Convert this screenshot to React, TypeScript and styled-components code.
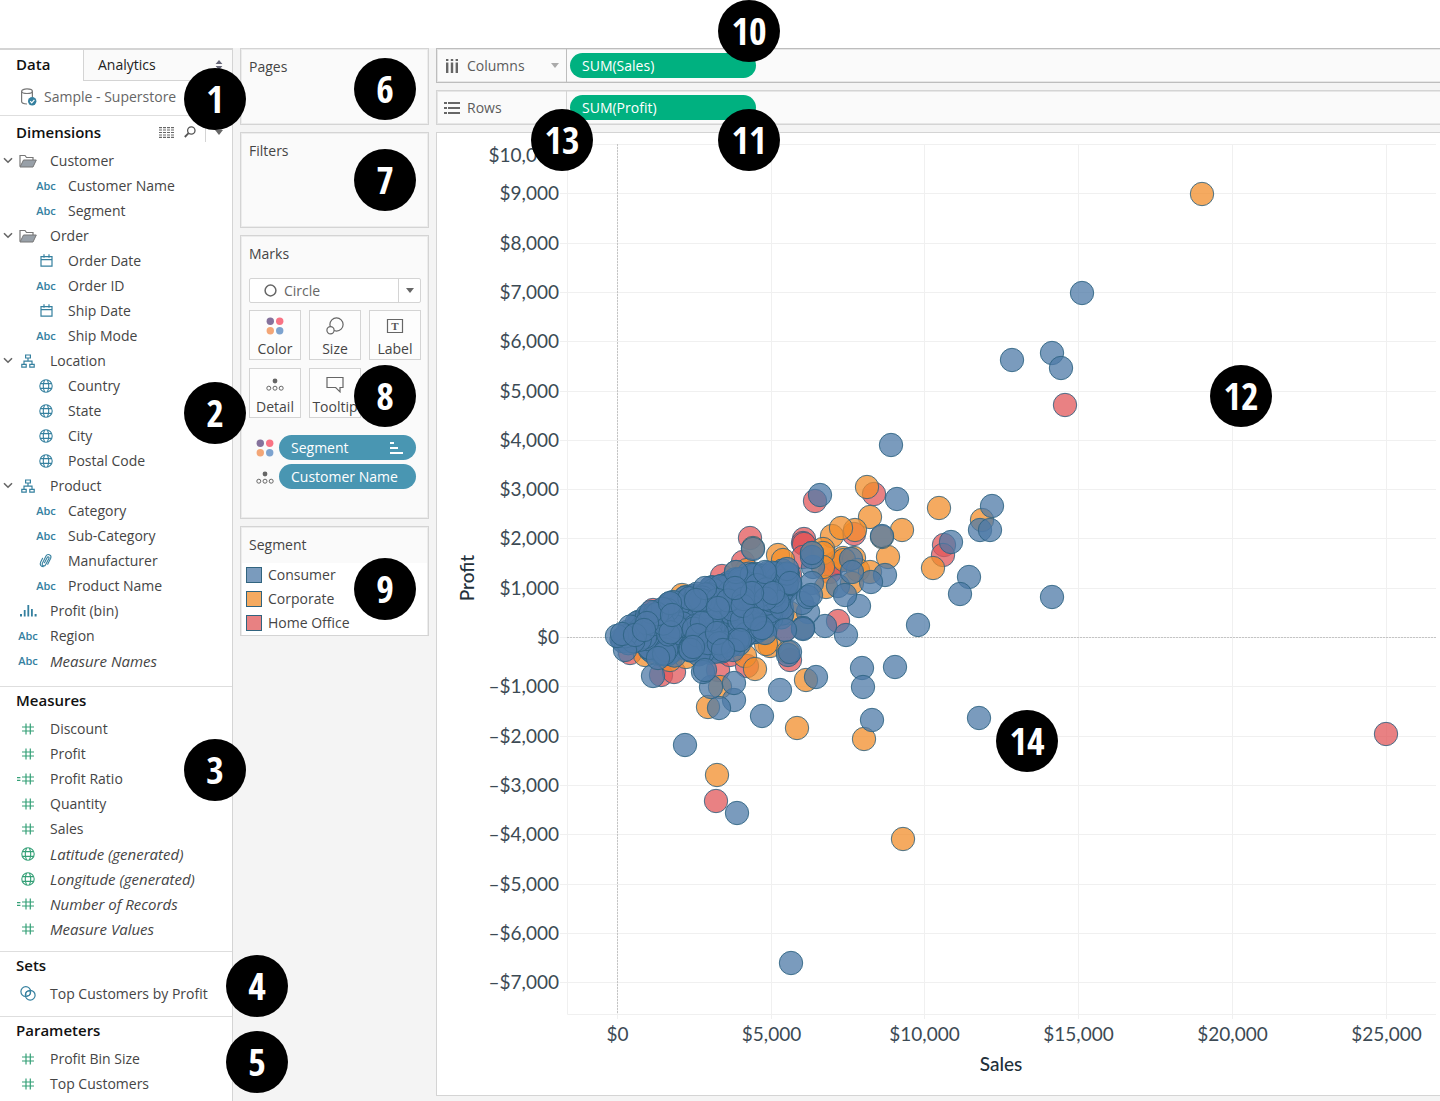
import React from "react";
import styled, { createGlobalStyle, css } from "styled-components";

const colors = {
  canvas: "#f4f4f4",
  card: "#fafafa",
  line: "#d4d4d4",
  lineStrong: "#bdbdbd",
  text: "#454545",
  dim: "#35809f",
  measure: "#35a077",
  pillBlue: "#4996b2",
  pillGreen: "#00b180",
};

const uiFont = `"Open Sans", "Noto Sans", sans-serif`;
const axisFont = `Lato, "Open Sans", sans-serif`;

const GlobalStyle = createGlobalStyle`
  *, *::before, *::after { box-sizing: border-box; }
  body { margin: 0; background: #fff; font-family: ${uiFont}; font-size: 14px; line-height: 20px; color: ${colors.text}; }
  button, select { font: inherit; color: inherit; }
  ul { list-style: none; margin: 0; padding: 0; }
  h2 { margin: 0; }
  svg { display: block; }
`;

/* ---------- layout ---------- */

const Page = styled.div`
  position: relative;
  padding-top: 48px;
`;

const Workspace = styled.main`
  display: flex;
  align-items: stretch;
  background: ${colors.canvas};
  min-height: calc(100vh - 48px);
`;

const DataPane = styled.aside`
  flex: 0 0 233px;
  background: #fff;
  border-top: 2px solid ${colors.line};
  border-right: 1px solid ${colors.line};
`;

const CardColumn = styled.div`
  flex: 0 0 203px;
  display: flex;
  flex-direction: column;
  gap: 7px;
  padding: 0 7px;
`;

const SheetColumn = styled.div`
  flex: 1;
  min-width: 0;
  display: flex;
  flex-direction: column;
  gap: 7px;
  padding-bottom: 4px;
`;

/* ---------- data pane ---------- */

const Tabs = styled.div`
  display: flex;
  height: 31px;
`;

const Tab = styled.button<{ $active?: boolean }>`
  display: flex;
  align-items: center;
  justify-content: space-between;
  border: 0;
  background: #fff;
  color: #222;
  padding: 0 0 4px 16px;
  width: 83px;
  ${(p) =>
    p.$active
      ? css`
          font-weight: 600;
          font-size: 15px;
          color: #111;
        `
      : css`
          flex: 1;
          background: ${colors.card};
          border-left: 1px solid ${colors.line};
          border-bottom: 1px solid ${colors.line};
          padding: 0 9px 0 14px;
        `}
`;

const Source = styled.button`
  display: flex;
  align-items: center;
  gap: 7px;
  width: 100%;
  height: 34px;
  border: 0;
  background: none;
  padding: 0 0 2px 20px;
  color: #666;
`;

const Section = styled.section<{ $pad: number }>`
  border-top: 1px solid #dedede;
  padding-bottom: ${(p) => p.$pad}px;
`;

const SectionHead = styled.div<{ $tall?: boolean }>`
  display: flex;
  align-items: center;
  height: ${(p) => (p.$tall ? 32 : 29)}px;
  padding: 0 0 ${(p) => (p.$tall ? 0 : 3)}px 16px;
`;

const SectionTitle = styled.h2`
  flex: 1;
  font-size: 15px;
  font-weight: 600;
  color: #111;
`;

const Tools = styled.div`
  display: flex;
  align-items: center;
  height: 100%;
`;

const Tool = styled.button<{ $divided?: boolean }>`
  display: flex;
  align-items: center;
  justify-content: center;
  width: ${(p) => (p.$divided ? 27 : 24)}px;
  height: 20px;
  border: 0;
  border-left: ${(p) => (p.$divided ? `1px solid ${colors.line}` : "0")};
  margin-left: ${(p) => (p.$divided ? 3 : 0)}px;
  background: none;
  padding: 0;
`;

const FieldRow = styled.button<{ $child?: boolean; $italic?: boolean }>`
  display: flex;
  align-items: center;
  width: 100%;
  height: 25px;
  border: 0;
  background: none;
  text-align: left;
  white-space: nowrap;
  padding: 0 0 0 ${(p) => (p.$child ? 18 : 0)}px;
  font-style: ${(p) => (p.$italic ? "italic" : "normal")};
  font-size: ${(p) => (p.$italic ? 15 : 14)}px;
`;

const Twisty = styled.span`
  width: 16px;
  padding-left: 3px;
`;

const IconSlot = styled.span`
  display: flex;
  justify-content: center;
  width: 24px;
  margin-right: 10px;
`;

const Abc = styled.span`
  color: ${colors.dim};
  font-size: 11px;
  font-weight: 600;
  font-style: normal;
`;

/* ---------- cards ---------- */

const Card = styled.section<{ $min: number }>`
  min-height: ${(p) => p.$min}px;
  background: ${colors.card};
  border: 1px solid ${colors.line};
  box-shadow: inset 0 0 0 1px #ececec;
  padding: 8px 7px 0 8px;
`;

const LegendCard = styled(Card)`
  padding: 8px 1px 0;
`;

const CardTitle = styled.h2`
  font-size: 14px;
  line-height: 20px;
  font-weight: 400;
`;

const LegendTitle = styled(CardTitle)`
  padding: 0 7px 8px;
`;

const MarkType = styled.label`
  position: relative;
  display: block;
  margin-top: 14px;
  width: 172px;
`;

const MarkSelect = styled.select`
  appearance: none;
  display: block;
  width: 100%;
  height: 25px;
  border: 1px solid ${colors.line};
  border-radius: 2px;
  background: #fff;
  padding: 0 28px 0 34px;
  color: #666;
`;

const MarkShape = styled.span`
  position: absolute;
  left: 15px;
  top: 6px;
  pointer-events: none;
`;

const MarkArrow = styled.span`
  position: absolute;
  right: 0;
  top: 1px;
  bottom: 1px;
  width: 23px;
  display: flex;
  align-items: center;
  justify-content: center;
  border-left: 1px solid ${colors.line};
  pointer-events: none;
`;

const MarkGrid = styled.div`
  display: grid;
  grid-template-columns: repeat(3, 52px);
  gap: 8px;
  margin: 7px 0 17px;
`;

const MarkButton = styled.button`
  display: flex;
  flex-direction: column;
  align-items: center;
  justify-content: space-between;
  height: 50px;
  border: 1px solid ${colors.line};
  background: #fdfdfd;
  padding: 6px 0 0;
`;

const Encodings = styled.ul`
  display: flex;
  flex-direction: column;
  gap: 4px;
`;

const Encoding = styled.li`
  display: grid;
  grid-template-columns: 30px 137px;
  align-items: center;
`;

const EncodingIcon = styled.span`
  display: flex;
  justify-content: center;
  padding-left: 2px;
`;

const Pill = styled.button<{ $green?: boolean }>`
  display: flex;
  align-items: center;
  justify-content: space-between;
  width: ${(p) => (p.$green ? 186 : 137)}px;
  height: 25px;
  border: 0;
  border-radius: 13px;
  background: ${(p) => (p.$green ? colors.pillGreen : colors.pillBlue)};
  color: #fff;
  padding: 0 13px 0 12px;
  white-space: nowrap;
`;

const LegendList = styled.ul`
  background: #fff;
`;

const LegendItem = styled.li`
  display: flex;
  align-items: center;
  gap: 6px;
  height: 24px;
  padding-left: 4px;
`;

const Swatch = styled.span<{ $color: string }>`
  width: 16px;
  height: 16px;
  border: 1px solid #31647f;
  background: ${(p) => p.$color};
`;

/* ---------- shelves ---------- */

const Shelf = styled.div<{ $strong?: boolean }>`
  display: flex;
  height: 35px;
  background: ${colors.card};
  border: 1px solid ${(p) => (p.$strong ? colors.lineStrong : colors.line)};
  border-right: 0;
  box-shadow: inset 1px 1px #e6e6e6, inset 0 -1px #e6e6e6;
`;

const ShelfLabel = styled.div<{ $strong?: boolean }>`
  display: flex;
  align-items: center;
  gap: 7px;
  width: 130px;
  padding: 0 7px;
  border-right: 1px solid ${(p) => (p.$strong ? colors.lineStrong : colors.line)};
`;

const ShelfName = styled.span`
  flex: 1;
  color: #5c5c5c;
`;

const ShelfDrop = styled.div`
  display: flex;
  align-items: center;
  padding-left: 3px;
`;

const ChartPanel = styled.section`
  background: #fff;
  border: 1px solid ${colors.line};
  border-right: 0;
`;

const ChartSvg = styled.svg`
  width: 100%;
  height: auto;
`;

const AxisText = styled.text`
  font-family: ${axisFont};
  font-size: 19px;
  fill: #3c4a54;
`;

const AxisTitle = styled.text`
  font-family: ${axisFont};
  font-size: 19px;
  font-weight: 500;
  fill: #22303a;
`;

/* ---------- numbered callouts ---------- */

const Callout = styled.span<{ $x: number; $y: number }>`
  position: absolute;
  left: ${(p) => p.$x - 31}px;
  top: ${(p) => p.$y - 31}px;
  width: 62px;
  height: 62px;
  border-radius: 50%;
  background: #000;
  color: #fff;
  display: flex;
  align-items: center;
  justify-content: center;
  font-family: "Open Sans Condensed", "Roboto Condensed", Roboto, sans-serif;
  font-size: 38px;
  line-height: 60px;
  padding-bottom: 2px;
  font-weight: 700;
`;

const callouts: [number, number, number][] = [
  [1, 215, 99], [2, 215, 413], [3, 215, 770], [4, 257, 986], [5, 257, 1062],
  [6, 385, 89], [7, 385, 180], [8, 385, 396], [9, 385, 589], [10, 749, 31],
  [11, 749, 140], [12, 1241, 396], [13, 562, 140], [14, 1027, 741],
];

/* ---------- icons ---------- */

const Chevron = () => (
  <svg width="10" height="7" viewBox="0 0 10 7" fill="none" stroke="#666" strokeWidth="1.6">
    <path d="M1 1.2 5 5.2 9 1.2" />
  </svg>
);

const FolderIcon = () => (
  <svg width="18" height="14" viewBox="0 0 18 14">
    <path d="M1 12.5V1.5h5l1.5 2H14V6" fill="#fff" stroke="#777" strokeWidth="1.2" />
    <path d="M1 13 4.5 6H17.3L14 13Z" fill="#98a0a8" stroke="#777" />
  </svg>
);

const HierarchyIcon = () => (
  <svg width="14" height="14" viewBox="0 0 14 14" fill="none" stroke={colors.dim} strokeWidth="1.2">
    <path d="M4.6 1h4.8v3H4.6zM.8 10.4h4.4v2.8H.8zM8.8 10.4h4.4v2.8H8.8zM7 4v3M3 10.4V7.2h8v3.2" />
  </svg>
);

const CalendarIcon = () => (
  <svg width="13" height="13" viewBox="0 0 13 13" fill="none" stroke={colors.dim} strokeWidth="1.2">
    <path d="M1 2.6h11v9.6H1zM1 5.6h11M4 .2v3.6M9 .2v3.6" />
  </svg>
);

const GlobeIcon = ({ color = colors.dim }: { color?: string }) => (
  <svg width="14" height="14" viewBox="0 0 14 14" fill="none" stroke={color} strokeWidth="1.1">
    <circle cx="7" cy="7" r="6.2" />
    <path d="M1.3 4.6h11.4M1.3 9.4h11.4M5.6 1C4 4.6 4 9.4 5.6 13M8.4 1C10 4.6 10 9.4 8.4 13" />
  </svg>
);

const ClipIcon = () => (
  <svg width="14" height="15" viewBox="0 0 14 15" fill="none" stroke={colors.dim} strokeWidth="1.1" strokeLinecap="round">
    <path d="M5.5 9.8 8.2 4.6c.7-1.4 2.4-.6 1.7.8L6.6 11.7c-1.1 2.2-4.2 1-3.2-1.4L7 3.1c1.4-2.8 6-1.4 4.7 2.1L8.7 11.2M3.6 5.2 1.7 9c-1.2 2.6.2 4.7 2.4 4.8" />
  </svg>
);

const BinIcon = () => (
  <svg width="17" height="12" viewBox="0 0 17 12" fill={colors.dim}>
    <path d="M0 9h2v2.5H0zM3.8 5h1.8v6.5H3.8zM7.4 0h1.8v11.5H7.4zM11 4h1.8v7.5H11zM14.6 9h2v2.5h-2z" />
  </svg>
);

const HashIcon = () => (
  <svg width="12" height="12" viewBox="0 0 12 12" fill="none" stroke={colors.measure} strokeWidth="1.2">
    <path d="M4 .5v11M8.3.5v11M0 4h12M0 8h12" />
  </svg>
);

const CalcHashIcon = () => (
  <svg width="22" height="12" viewBox="0 0 22 12" fill="none" stroke={colors.measure} strokeWidth="1.2">
    <path d="M9 .5v11M13.3.5v11M5 4h12M5 8h12M0 4.7h3.4M0 7.3h3.4" />
  </svg>
);

const SetIcon = () => (
  <svg width="16" height="15" viewBox="0 0 16 15" fill="none" stroke={colors.dim} strokeWidth="1.2">
    <circle cx="5.8" cy="5.6" r="4.9" />
    <circle cx="10.2" cy="9.2" r="4.9" />
    <circle cx="8" cy="7.4" r="2.4" strokeWidth="0.8" />
  </svg>
);

const DatabaseIcon = () => (
  <svg width="17" height="18" viewBox="0 0 17 18">
    <g fill="none" stroke="#777" strokeWidth="1.2">
      <ellipse cx="7" cy="3.2" rx="5.4" ry="2.3" />
      <path d="M1.6 3.2v10.4c0 1.3 2.4 2.4 5.4 2.4M12.4 3.2V9" />
    </g>
    <circle cx="12.2" cy="13.2" r="4.2" fill={colors.dim} />
    <path d="m10.2 13.2 1.5 1.6 2.7-3" fill="none" stroke="#fff" strokeWidth="1.2" />
  </svg>
);

const SpinnerArrows = () => (
  <svg width="8" height="10" viewBox="0 0 8 10" fill="#667">
    <path d="M4 0 7.4 4H.6zM4 10 .6 6h6.8z" />
  </svg>
);

const ListIcon = () => (
  <svg width="15" height="11" viewBox="0 0 15 11" stroke="#666" strokeWidth="1.2">
    <path d="M0 .6h15M0 3h15M0 5.5h15M0 8h15M0 10.4h15" strokeDasharray="3 1" />
  </svg>
);

const SearchIcon = () => (
  <svg width="12" height="12" viewBox="0 0 12 12" fill="none" stroke="#555">
    <circle cx="7.3" cy="4.5" r="3.7" strokeWidth="1.3" />
    <path d="M4.6 7.2.8 11" strokeWidth="1.8" />
  </svg>
);

const Caret = ({ color = "#666" }: { color?: string }) => (
  <svg width="8" height="5" viewBox="0 0 8 5" fill={color}>
    <path d="M0 0h8L4 5z" />
  </svg>
);

const ColorIcon = () => (
  <svg width="18" height="18" viewBox="0 0 18 18">
    <circle cx="4.3" cy="4.3" r="3.7" fill="#85729c" />
    <circle cx="13.7" cy="4.3" r="3.7" fill="#f97384" />
    <circle cx="4.3" cy="13.7" r="3.7" fill="#f3a677" />
    <circle cx="13.7" cy="13.7" r="3.7" fill="#7da3cf" />
  </svg>
);

const SizeIcon = () => (
  <svg width="18" height="18" viewBox="0 0 18 18" fill="none" stroke="#666" strokeWidth="1.2">
    <circle cx="10.5" cy="7.5" r="6.6" />
    <circle cx="4.5" cy="13.3" r="3.6" fill="#fdfdfd" />
  </svg>
);

const LetterIcon = () => (
  <svg width="18" height="18" viewBox="0 0 18 18">
    <path d="M1.5 2.5h15v13h-15z" fill="none" stroke="#666" strokeWidth="1.2" />
    <text x="9" y="13" textAnchor="middle" fontFamily="Liberation Serif, serif" fontSize="11" fontWeight="700" fill="#555">T</text>
  </svg>
);

const DetailIcon = () => (
  <svg width="18" height="18" viewBox="0 0 18 18" fill="none" stroke="#666">
    <circle cx="9" cy="6" r="2.4" fill="#666" stroke="none" />
    <circle cx="2.8" cy="13.2" r="2" />
    <circle cx="9" cy="13.2" r="2" />
    <circle cx="15.2" cy="13.2" r="2" />
  </svg>
);

const TooltipIcon = () => (
  <svg width="18" height="18" viewBox="0 0 18 18" fill="none" stroke="#666" strokeWidth="1.2">
    <path d="M1 2.5h16v10h-3v4.3l-4.3-4.3H1z" />
  </svg>
);

const SortIcon = () => (
  <svg width="13" height="12" viewBox="0 0 13 12" fill="#fff">
    <path d="M0 0h4v2H0zM0 5h8v2H0zM0 10h13v2H0z" />
  </svg>
);

const ColumnsIcon = () => (
  <svg width="16" height="16" viewBox="0 0 16 16" fill="#666">
    <path d="M2 1h2.400v2H2zM6.800 1h2.400v2H6.800zM11.600 1H14v2h-2.400zM2 4.500h2.400V15H2zM6.800 4.500h2.400V15H6.800zM11.600 4.500H14V15h-2.400z" />
  </svg>
);

const RowsIcon = () => (
  <svg width="16" height="16" viewBox="0 0 16 16" fill="#666">
    <path d="M0 2h3v2H0zM0 7h3v2H0zM0 12h3v2H0zM4 2h12v2H4zM4 7h12v2H4zM4 12h12v2H4z" />
  </svg>
);

/* ---------- fields ---------- */

type IconName = "abc" | "folder" | "tree" | "date" | "geo" | "clip" | "bin" | "hash" | "calc" | "geoMeasure" | "set";

type Field = { name: string; icon: IconName; child?: boolean; group?: boolean; italic?: boolean };

const icons: Record<IconName, React.ReactNode> = {
  abc: <Abc>Abc</Abc>,
  folder: <FolderIcon />,
  tree: <HierarchyIcon />,
  date: <CalendarIcon />,
  geo: <GlobeIcon />,
  clip: <ClipIcon />,
  bin: <BinIcon />,
  hash: <HashIcon />,
  calc: <CalcHashIcon />,
  geoMeasure: <GlobeIcon color={colors.measure} />,
  set: <SetIcon />,
};

const dimensions: Field[] = [
  { name: "Customer", icon: "folder", group: true },
  { name: "Customer Name", icon: "abc", child: true },
  { name: "Segment", icon: "abc", child: true },
  { name: "Order", icon: "folder", group: true },
  { name: "Order Date", icon: "date", child: true },
  { name: "Order ID", icon: "abc", child: true },
  { name: "Ship Date", icon: "date", child: true },
  { name: "Ship Mode", icon: "abc", child: true },
  { name: "Location", icon: "tree", group: true },
  { name: "Country", icon: "geo", child: true },
  { name: "State", icon: "geo", child: true },
  { name: "City", icon: "geo", child: true },
  { name: "Postal Code", icon: "geo", child: true },
  { name: "Product", icon: "tree", group: true },
  { name: "Category", icon: "abc", child: true },
  { name: "Sub-Category", icon: "abc", child: true },
  { name: "Manufacturer", icon: "clip", child: true },
  { name: "Product Name", icon: "abc", child: true },
  { name: "Profit (bin)", icon: "bin" },
  { name: "Region", icon: "abc" },
  { name: "Measure Names", icon: "abc", italic: true },
];

const measures: Field[] = [
  { name: "Discount", icon: "hash" },
  { name: "Profit", icon: "hash" },
  { name: "Profit Ratio", icon: "calc" },
  { name: "Quantity", icon: "hash" },
  { name: "Sales", icon: "hash" },
  { name: "Latitude (generated)", icon: "geoMeasure", italic: true },
  { name: "Longitude (generated)", icon: "geoMeasure", italic: true },
  { name: "Number of Records", icon: "calc", italic: true },
  { name: "Measure Values", icon: "hash", italic: true },
];

const sets: Field[] = [{ name: "Top Customers by Profit", icon: "set" }];

const parameters: Field[] = [
  { name: "Profit Bin Size", icon: "hash" },
  { name: "Top Customers", icon: "hash" },
];

const FieldSection = ({
  title, fields, pad = 10, tools,
}: { title: string; fields: Field[]; pad?: number; tools?: boolean }) => (
  <Section $pad={pad}>
    <SectionHead $tall={tools}>
      <SectionTitle>{title}</SectionTitle>
      {tools && (
        <Tools>
          <Tool aria-label="View data"><ListIcon /></Tool>
          <Tool aria-label="Find field"><SearchIcon /></Tool>
          <Tool aria-label="Pane menu" $divided><Caret /></Tool>
        </Tools>
      )}
    </SectionHead>
    <ul>
      {fields.map((f) => (
        <li key={f.name}>
          <FieldRow $child={f.child} $italic={f.italic} aria-expanded={f.group ? true : undefined}>
            <Twisty>{f.group && <Chevron />}</Twisty>
            <IconSlot>{icons[f.icon]}</IconSlot>
            {f.name}
          </FieldRow>
        </li>
      ))}
    </ul>
  </Section>
);

/* ---------- chart ---------- */

type Point = [number, number];

const BLUE = "#4e79a7";
const ORANGE = "#f28e2b";
const RED = "#e15759";

const homeOffice: Point[] = [
  [1386, 734], [1065, 405], [815, 501], [874, 494], [944, 545], [943, 555], [854, 534], [838, 621],
  [750, 538], [804, 539], [803, 543], [804, 544], [803, 557], [832, 565], [837, 562], [830, 572],
  [722, 576], [743, 562], [653, 610], [630, 653], [661, 675], [674, 672], [718, 670], [747, 666],
  [790, 660], [716, 801], [785, 630], [730, 655], [790, 575],
];

const corporate: Point[] = [
  [1202, 194], [867, 487], [870, 517], [902, 530], [939, 508], [982, 520], [888, 557], [933, 568],
  [832, 536], [855, 530], [841, 528], [882, 537], [843, 558], [854, 558], [844, 560], [858, 570],
  [870, 572], [852, 583], [826, 587], [823, 549], [823, 553], [823, 567], [778, 555], [783, 560],
  [753, 548], [747, 570], [736, 572], [682, 595], [692, 596], [790, 613], [645, 655], [670, 660],
  [686, 657], [770, 646], [766, 644], [745, 656], [755, 669], [720, 687], [708, 707], [806, 680],
  [797, 728], [864, 739], [717, 775], [903, 839], [812, 553], [788, 652], [803, 628],
];

const consumer: Point[] = [
  [1082, 293], [1052, 353], [1061, 368], [1012, 360], [891, 445], [820, 495], [897, 499], [992, 506],
  [980, 530], [990, 530], [951, 542], [882, 536], [969, 577], [960, 594], [1052, 597], [885, 575],
  [918, 625], [859, 606], [846, 635], [825, 626], [838, 586], [845, 595], [871, 582], [851, 559],
  [852, 572], [862, 668], [863, 687], [895, 667], [872, 720], [979, 718], [816, 677], [791, 963],
  [737, 813], [685, 745], [762, 716], [780, 690], [734, 700], [734, 683], [719, 708], [711, 687],
  [703, 672], [705, 670], [653, 676], [788, 655], [790, 652], [753, 549], [813, 567],
  [812, 557], [812, 553], [812, 583], [808, 612], [802, 603], [808, 597], [811, 595], [803, 628],
  [803, 629], [785, 630], [765, 633], [762, 628], [736, 572], [705, 588], [651, 612], [625, 650],
  [658, 658], [733, 650], [740, 640], [787, 569], [790, 583], [765, 572], [773, 593], [752, 593],
  [735, 588], [670, 603], [696, 600], [718, 608], [672, 615], [647, 623], [755, 619], [717, 633],
  [723, 650], [693, 647], [617, 636], [622, 634], [635, 635], [644, 630],
];

const denseOutline: Point[] = [
  [617, 636], [634, 622], [652, 613], [670, 602], [690, 595], [707, 589], [736, 577], [752, 572],
  [770, 571], [788, 570], [794, 584], [784, 600], [784, 616], [767, 626], [752, 637], [735, 648],
  [718, 654], [695, 657], [665, 657], [640, 649], [618, 639],
];

const inside = ([x, y]: Point, poly: Point[]) => {
  let hit = false;
  for (let i = 0, j = poly.length - 1; i < poly.length; j = i++) {
    const [xi, yi] = poly[i];
    const [xj, yj] = poly[j];
    if (yi > y !== yj > y && x < ((xj - xi) * (y - yi)) / (yj - yi) + xi) hit = !hit;
  }
  return hit;
};

const scatterWithin = (poly: Point[], count: number): Point[] => {
  let seed = 20;
  const next = () => {
    seed = (seed * 16807) % 2147483647;
    return seed / 2147483647;
  };
  const points: Point[] = [];
  while (points.length < count) {
    const p: Point = [617 + next() * 178, 570 + next() * 88];
    if (inside(p, poly)) points.push(p);
  }
  return points;
};

const series: { color: string; points: Point[] }[] = [
  { color: RED, points: homeOffice },
  { color: ORANGE, points: corporate },
  { color: BLUE, points: [...scatterWithin(denseOutline, 460), ...consumer] },
];

const yAt = (v: number) => Math.round(637 - (v / 1000) * 49.3) + 0.5;
const xAt = (v: number) => Math.round(617 + (v / 5000) * 153.7) + 0.5;
const money = (v: number) => `${v < 0 ? "–" : ""}$${Math.abs(v).toLocaleString("en-US")}`;

const yTicks = Array.from({ length: 18 }, (_, i) => 10000 - i * 1000);
const xTicks = [0, 5000, 10000, 15000, 20000, 25000];

const ScatterPlot = () => (
  <ChartSvg viewBox="437 133 1003 962" role="img" aria-label="Profit by Sales for each customer">
    <g stroke="#f0f0f0">
      {yTicks.map((v) => (
        <path key={v} d={`M${v === 10000 ? 567 : 560} ${yAt(v)}H1436`} />
      ))}
      {xTicks.map((v) => (
        <path key={v} d={`M${xAt(v)} 144V1019`} />
      ))}
      <path d="M567.5 144V1014.5H1436" fill="none" />
    </g>
    <g stroke="#c4c4c4" strokeDasharray="2 1">
      <path d={`M567 ${yAt(0)}H1436`} />
      <path d={`M${xAt(0)} 144V1014`} />
    </g>
    {series.map((s) => (
      <g key={s.color} fill={s.color} fillOpacity="0.75" stroke="#2c6280" strokeOpacity="0.85">
        {s.points.map(([x, y], i) => (
          <circle key={i} cx={x} cy={y} r="11.7" />
        ))}
      </g>
    ))}
    {yTicks.map((v) => (
      <AxisText key={v} x="559" y={v === 10000 ? 162 : yAt(v) + 6} textAnchor="end">{money(v)}</AxisText>
    ))}
    {xTicks.map((v) => (
      <AxisText key={v} x={xAt(v)} y="1041" textAnchor="middle">{money(v)}</AxisText>
    ))}
    <AxisTitle x="1001" y="1071" textAnchor="middle">Sales</AxisTitle>
    <AxisTitle transform="translate(474 578) rotate(-90)" textAnchor="middle">Profit</AxisTitle>
  </ChartSvg>
);

const legend = [
  { name: "Consumer", color: "#7a9bbd" },
  { name: "Corporate", color: "#f5aa60" },
  { name: "Home Office", color: "#e88182" },
];

const markButtons = [
  { name: "Color", icon: <ColorIcon /> },
  { name: "Size", icon: <SizeIcon /> },
  { name: "Label", icon: <LetterIcon /> },
  { name: "Detail", icon: <DetailIcon /> },
  { name: "Tooltip", icon: <TooltipIcon /> },
];

export default function App() {
  return (
    <Page>
      <GlobalStyle />
      <Workspace>
        <DataPane>
          <Tabs>
            <Tab $active>Data</Tab>
            <Tab>Analytics<SpinnerArrows /></Tab>
          </Tabs>
          <Source><DatabaseIcon />Sample - Superstore</Source>
          <FieldSection title="Dimensions" fields={dimensions} pad={13} tools />
          <FieldSection title="Measures" fields={measures} />
          <FieldSection title="Sets" fields={sets} />
          <FieldSection title="Parameters" fields={parameters} pad={0} />
        </DataPane>

        <CardColumn>
          <Card $min={77}><CardTitle>Pages</CardTitle></Card>
          <Card $min={96}><CardTitle>Filters</CardTitle></Card>
          <Card $min={284}>
            <CardTitle>Marks</CardTitle>
            <MarkType>
              <MarkSelect aria-label="Mark type" defaultValue="Circle">
                <option>Circle</option>
              </MarkSelect>
              <MarkShape>
                <svg width="13" height="13" viewBox="0 0 13 13" fill="none" stroke="#666" strokeWidth="1.5">
                  <circle cx="6.5" cy="6.5" r="5.4" />
                </svg>
              </MarkShape>
              <MarkArrow><Caret /></MarkArrow>
            </MarkType>
            <MarkGrid>
              {markButtons.map((b) => (
                <MarkButton key={b.name}>{b.icon}{b.name}</MarkButton>
              ))}
            </MarkGrid>
            <Encodings>
              <Encoding>
                <EncodingIcon><ColorIcon /></EncodingIcon>
                <Pill>Segment<SortIcon /></Pill>
              </Encoding>
              <Encoding>
                <EncodingIcon><DetailIcon /></EncodingIcon>
                <Pill>Customer Name</Pill>
              </Encoding>
            </Encodings>
          </Card>
          <LegendCard $min={110}>
            <LegendTitle>Segment</LegendTitle>
            <LegendList>
              {legend.map((l) => (
                <LegendItem key={l.name}><Swatch $color={l.color} />{l.name}</LegendItem>
              ))}
            </LegendList>
          </LegendCard>
        </CardColumn>

        <SheetColumn>
          <Shelf $strong>
            <ShelfLabel $strong><ColumnsIcon /><ShelfName>Columns</ShelfName><Caret color="#aaa" /></ShelfLabel>
            <ShelfDrop><Pill $green>SUM(Sales)</Pill></ShelfDrop>
          </Shelf>
          <Shelf>
            <ShelfLabel><RowsIcon /><ShelfName>Rows</ShelfName></ShelfLabel>
            <ShelfDrop><Pill $green>SUM(Profit)</Pill></ShelfDrop>
          </Shelf>
          <ChartPanel><ScatterPlot /></ChartPanel>
        </SheetColumn>
      </Workspace>

      {callouts.map(([n, x, y]) => (
        <Callout key={n} $x={x} $y={y}>{n}</Callout>
      ))}
    </Page>
  );
}
